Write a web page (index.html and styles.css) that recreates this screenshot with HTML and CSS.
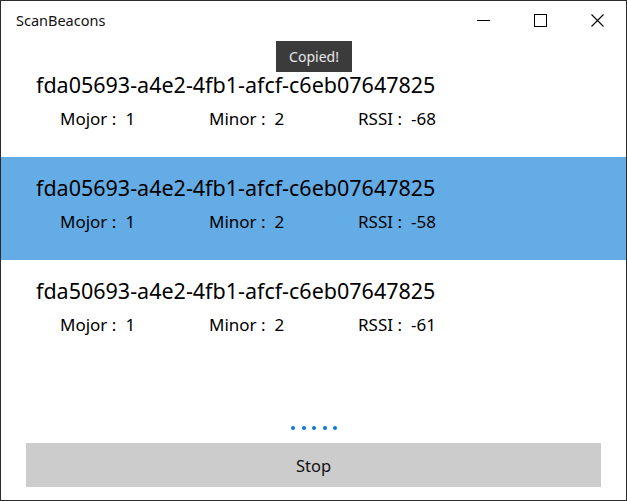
FILE: index.html
```html
<!DOCTYPE html>
<html>
<head>
<meta charset="utf-8">
<link rel="stylesheet" href="styles.css">
</head>
<body>
<div class="window">
  <div class="titlebar">
    <span class="title">ScanBeacons</span>
    <div class="controls">
      <div class="ctl"><svg width="13" height="13" viewBox="0 0 13 13"><line x1="0" y1="6.5" x2="13" y2="6.5" stroke="#000" stroke-width="1"/></svg></div>
      <div class="ctl"><svg width="13" height="13" viewBox="0 0 13 13"><rect x="0.5" y="0.5" width="12" height="12" fill="none" stroke="#000" stroke-width="1"/></svg></div>
      <div class="ctl"><svg width="13" height="13" viewBox="0 0 13 13"><path d="M0.5 0.5 L12.5 12.5 M12.5 0.5 L0.5 12.5" stroke="#000" stroke-width="1.1"/></svg></div>
    </div>
  </div>
  <div class="tooltip">Copied!</div>
  <div class="list">
    <div class="row">
      <div class="uuid">fda05693-a4e2-4fb1-afcf-c6eb07647825</div>
      <div class="details">
        <div class="field"><span class="label">Mojor :</span><span class="val">1</span></div>
        <div class="field"><span class="label">Minor :</span><span class="val">2</span></div>
        <div class="field"><span class="label">RSSI :</span><span class="val">-68</span></div>
      </div>
    </div>
    <div class="row selected">
      <div class="uuid">fda05693-a4e2-4fb1-afcf-c6eb07647825</div>
      <div class="details">
        <div class="field"><span class="label">Mojor :</span><span class="val">1</span></div>
        <div class="field"><span class="label">Minor :</span><span class="val">2</span></div>
        <div class="field"><span class="label">RSSI :</span><span class="val">-58</span></div>
      </div>
    </div>
    <div class="row">
      <div class="uuid">fda50693-a4e2-4fb1-afcf-c6eb07647825</div>
      <div class="details">
        <div class="field"><span class="label">Mojor :</span><span class="val">1</span></div>
        <div class="field"><span class="label">Minor :</span><span class="val">2</span></div>
        <div class="field"><span class="label">RSSI :</span><span class="val">-61</span></div>
      </div>
    </div>
  </div>
  <div class="footer">
    <div class="dots"><i></i><i></i><i></i><i></i><i></i></div>
    <div class="button">Stop</div>
  </div>
</div>
</body>
</html>
```
FILE: styles.css
```css
html, body {
  margin: 0;
  padding: 0;
  background: #fff;
}
body {
  font-family: "Noto Sans", "Open Sans", sans-serif;
  color: #000;
}
.window {
  position: relative;
  width: 627px;
  height: 501px;
  box-sizing: border-box;
  border: 1px solid #2b2b2b;
  display: flex;
  flex-direction: column;
  background: #fff;
}
.titlebar {
  height: 39px;
  display: flex;
  align-items: center;
  justify-content: space-between;
  flex: none;
}
.title {
  margin-left: 15px;
  font-size: 14.5px;
  color: #111;
  margin-top: -1px;
}
.controls {
  display: flex;
}
.ctl {
  width: 57px;
  height: 39px;
  display: flex;
  align-items: center;
  justify-content: center;
}
.ctl svg { display: block; }
.tooltip {
  position: absolute;
  left: 275px;
  top: 40px;
  width: 76px;
  height: 31px;
  background: #3b3b3b;
  color: #e8e8e8;
  font-size: 14px;
  display: flex;
  align-items: center;
  justify-content: center;
}
.list {
  margin-top: 14px;
  display: flex;
  flex-direction: column;
}
.row {
  height: 103px;
  box-sizing: border-box;
  padding-top: 16px;
  padding-left: 35px;
}
.row.selected {
  background: #64ace6;
}
.uuid {
  font-size: 21.5px;
  line-height: 30px;
  height: 30px;
  white-space: nowrap;
}
.details {
  display: flex;
  padding-left: 24px;
  margin-top: 7px;
  font-size: 17px;
  line-height: 24px;
}
.field {
  width: 149px;
  white-space: nowrap;
}
.val {
  margin-left: 9px;
}
.footer {
  margin-top: auto;
  display: flex;
  flex-direction: column;
  align-items: center;
  padding-bottom: 13px;
}
.dots {
  display: flex;
  gap: 6.5px;
  margin-bottom: 13px;
  margin-left: 1px;
}
.dots i {
  width: 4px;
  height: 4px;
  border-radius: 50%;
  background: #0a78d7;
  display: block;
}
.button {
  width: 575px;
  height: 44px;
  background: #cccccc;
  display: flex;
  align-items: center;
  justify-content: center;
  font-size: 16.5px;
  color: #111;
}
```
